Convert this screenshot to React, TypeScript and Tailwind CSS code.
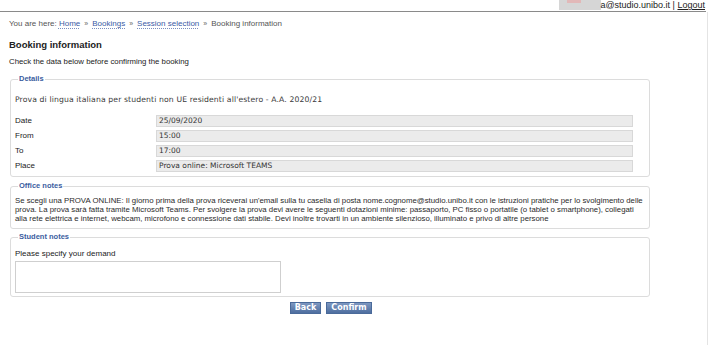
const link = "text-[#3b5ba5] underline decoration-dotted decoration-[#7a8fc0] underline-offset-2";
const sep = <span className="mx-[4px] text-[7px] text-[#666]">»</span>;

const rows = [
  { label: "Date", value: "25/09/2020" },
  { label: "From", value: "15:00" },
  { label: "To", value: "17:00" },
  { label: "Place", value: "Prova online: Microsoft TEAMS" },
];

function Box({ title, children, className }: { title: string; children: React.ReactNode; className?: string }) {
  return (
    <fieldset className={"ml-[1px] w-[640px] rounded-[3px] border border-[#dcdcdc] px-[4px] " + (className ?? "")}>
      <legend className="ml-[3px] px-[1px] text-[7.5px] font-bold leading-[10px] text-[#3a5da0]">
        {title}
      </legend>
      {children}
    </fieldset>
  );
}

export default function App() {
  return (
    <div className="h-[345px] w-[720px] overflow-hidden bg-white text-[#333] [font-family:'Liberation_Sans',Arial,sans-serif]">
      <div className="flex h-[12px] w-[706px] items-start justify-end border-b border-[#8a8a8a] text-[9px] leading-[10px] text-[#222]">
        <span className="relative mr-[1px]">
          <span className="mr-[-1px] inline-block h-[10px] w-[42px] bg-[#d6d6d6] align-top" />
          <span className="absolute left-[8px] top-0 h-[3px] w-[14px] bg-[#e2b8b8]" />
          a@studio.unibo.it | <span className="underline">Logout</span>
        </span>
      </div>

      <div className="h-[333px] w-[708px] border-r border-[#e4e4e4] pl-[9px]">
        <div className="pt-[7px] text-[8px] leading-[10px] text-[#555]">
          You are here: <span className={link}>Home</span>
          {sep}
          <span className={link}>Bookings</span>
          {sep}
          <span className={link}>Session selection</span>
          {sep}Booking information
        </div>

        <h1 className="mt-[10px] text-[9.5px] font-bold leading-[12px] text-[#222]">Booking information</h1>
        <p className="mt-[6px] text-[7.8px] leading-[10px] text-[#222]">Check the data below before confirming the booking</p>

        <Box title="Details" className="mt-[7px] pb-[4px]">
          <div className="mt-[11px] text-[7.7px] leading-[10px] tracking-[0.12px] text-[#3a3a3a] [font-family:'DejaVu_Sans',sans-serif]">
            Prova di lingua italiana per studenti non UE residenti all'estero - A.A. 2020/21
          </div>
          <div className="mt-[10px] flex flex-col gap-[3px]">
            {rows.map((r) => (
              <div key={r.label} className="flex items-center">
                <div className="w-[141px] text-[8px] leading-[10px] text-[#222]">{r.label}</div>
                <div className="h-[12px] w-[477px] border border-[#d8d8d8] bg-[#ebebeb] pl-[2px] text-[7.5px] leading-[10px] text-[#333] [font-family:'DejaVu_Sans',sans-serif]">
                  {r.value}
                </div>
              </div>
            ))}
          </div>
        </Box>

        <Box title="Office notes" className="mt-[4px] pb-[5px]">
          <p className="mt-[5px] text-[7.8px] leading-[9px] text-[#2a2a2a]">
            Se scegli una PROVA ONLINE: Il giorno prima della prova riceverai un'email sulla tu casella di posta nome.cognome@studio.unibo.it con le istruzioni pratiche per lo svolgimento delle prova. La prova sarà fatta tramite Microsoft Teams. Per svolgere la prova devi avere le seguenti dotazioni minime: passaporto, PC fisso o portatile (o tablet o smartphone), collegati alla rete elettrica e internet, webcam, microfono e connessione dati stabile. Devi inoltre trovarti in un ambiente silenzioso, illuminato e privo di altre persone
          </p>
        </Box>

        <Box title="Student notes" className="mt-[3px] pb-[3px]">
          <div className="mt-[7px] text-[8px] leading-[10px] text-[#222]">Please specify your demand</div>
          <textarea className="mt-[2px] block h-[32px] w-[266px] resize-none border border-[#cfcfcf] bg-white" />
        </Box>

        <div className="ml-[281px] mt-[5px] flex gap-[5px]">
          <button className="h-[12px] w-[31px] border border-[#4a6a9a] bg-gradient-to-b from-[#7d97c0] to-[#4e6e9f] text-[8px] font-bold leading-[10px] text-white [font-family:'DejaVu_Sans',sans-serif]">
            Back
          </button>
          <button className="h-[12px] w-[46px] border border-[#4a6a9a] bg-gradient-to-b from-[#7d97c0] to-[#4e6e9f] text-[8px] font-bold leading-[10px] text-white [font-family:'DejaVu_Sans',sans-serif]">
            Confirm
          </button>
        </div>
      </div>
    </div>
  );
}
